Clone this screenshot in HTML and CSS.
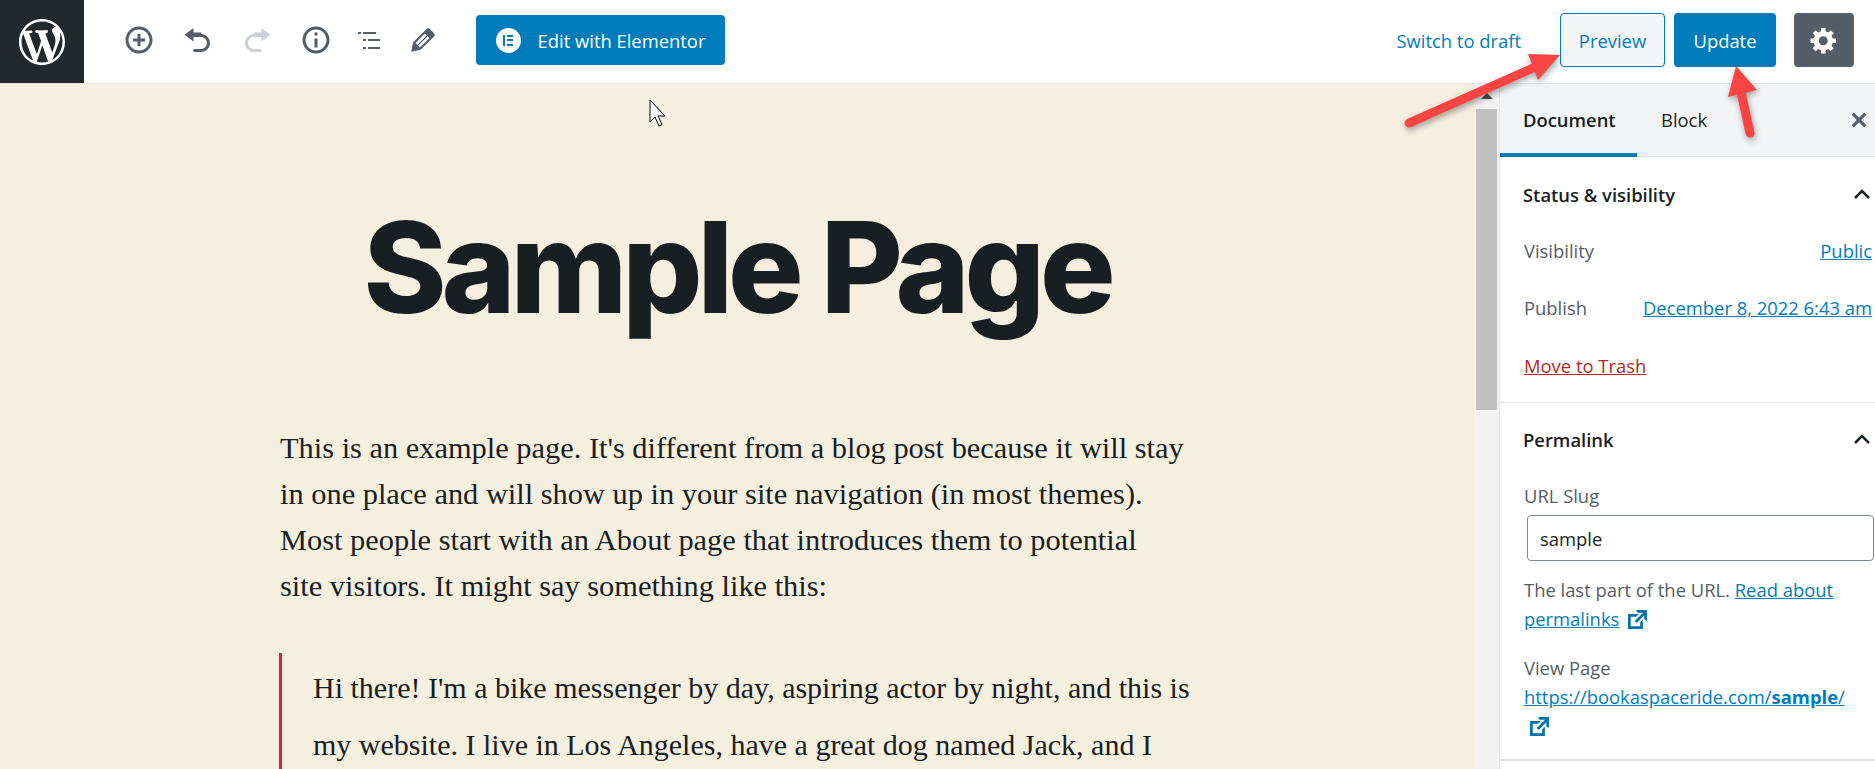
FILE: index.html
```html
<!DOCTYPE html>
<html lang="en">
<head>
<meta charset="utf-8">
<title>Sample Page</title>
<link rel="stylesheet" href="styles.css">
</head>
<body>
<div class="app">
  <header class="topbar">
    <a class="wp-logo"><svg viewBox="0 0 20 20" class="wp-svg"><path d="M20 10c0-5.51-4.49-10-10-10C4.48 0 0 4.49 0 10c0 5.52 4.48 10 10 10 5.51 0 10-4.48 10-10zM7.78 15.37L4.37 6.22c.55-.02 1.17-.08 1.17-.08.5-.06.44-1.13-.06-1.11 0 0-1.45.11-2.37.11-.18 0-.37 0-.58-.01C4.12 2.69 6.87 1.11 10 1.11c2.33 0 4.45.87 6.05 2.34-.68-.11-1.65.39-1.65 1.58 0 .74.45 1.36.9 2.1.35.61.55 1.36.55 2.46 0 1.49-1.4 5-1.4 5l-3.03-8.37c.54-.02.82-.17.82-.17.5-.05.44-1.25-.06-1.22 0 0-1.44.12-2.38.12-.87 0-2.33-.12-2.33-.12-.5-.03-.56 1.2-.06 1.22l.92.08 1.26 3.41zM17.41 10c.24-.64.74-1.87.43-4.25.7 1.29 1.05 2.71 1.05 4.25 0 3.29-1.73 6.24-4.4 7.78.97-2.59 1.94-5.2 2.92-7.78zM6.1 18.09C3.12 16.65 1.11 13.53 1.11 10c0-1.3.23-2.48.72-3.59C3.25 10.3 4.67 14.2 6.1 18.09zm4.03-6.63l2.58 6.98c-.86.29-1.76.45-2.71.45-.79 0-1.57-.11-2.29-.33.81-2.38 1.62-4.74 2.42-7.1z"/></svg></a>
    <div class="tools">
      <span class="tool"><svg viewBox="0 0 20 20" class="ico"><path d="M10 1c-5 0-9 4-9 9s4 9 9 9 9-4 9-9-4-9-9-9zm0 16c-3.900 0-7-3.100-7-7s3.100-7 7-7 7 3.100 7 7-3.100 7-7 7zm1-11H9v3H6v2h3v3h2v-3h3V9h-3V6z"/></svg></span>
      <span class="tool"><svg viewBox="0 0 20 20" class="ico"><path d="M12 5H7V2L1 6.500 7 11V8h5c2.200 0 4 1.800 4 4s-1.800 4-4 4H7v2h5c3.300 0 6-2.700 6-6s-2.700-6-6-6z"/></svg></span>
      <span class="tool tool-off"><svg viewBox="0 0 20 20" class="ico"><path d="M8 5h5V2l6 4.500-6 4.500V8H8c-2.200 0-4 1.800-4 4s1.800 4 4 4h5v2H8c-3.300 0-6-2.700-6-6s2.700-6 6-6z"/></svg></span>
      <span class="tool"><svg viewBox="0 0 20 20" class="ico"><path d="M10 1c-5 0-9 4-9 9s4 9 9 9 9-4 9-9-4-9-9-9zm0 16c-3.900 0-7-3.100-7-7s3.100-7 7-7 7 3.100 7 7-3.100 7-7 7zM9 9h2v6H9zm0-4h2v2H9z"/></svg></span>
      <span class="tool tool-list"><svg viewBox="0 0 22 17" class="ico-list"><path d="M0 0h3v2H0zm5 0h13v2H5zM5 7h3v2H5zm5 0h12v2H10zM5 15h3v2H5zm5 0h12v2H10z"/></svg></span>
      <span class="tool tool-edit"><svg viewBox="0 0 20 20" class="ico ico-edit"><path d="M13.890 3.390l2.710 2.720c.46.46.42 1.240.03 1.640l-8.010 8.020-5.560 1.160 1.160-5.580s7.600-7.630 7.990-8.030c.39-.39 1.220-.39 1.680.07zm-2.730 2.790l-5.590 5.610 1.110 1.110 5.540-5.650zm-2.970 8.230l5.580-5.600-1.070-1.080-5.590 5.600z"/></svg></span>
    </div>
    <a class="btn btn-elementor"><span class="el-badge"><i class="el-bar"></i><i class="el-lines"><b></b><b></b><b></b></i></span>Edit with Elementor</a>
    <a class="draft">Switch to draft</a>
    <a class="btn btn-preview">Preview</a>
    <a class="btn btn-update">Update</a>
    <a class="btn btn-gear"><svg viewBox="0 0 20 20" class="gear"><path d="M18 12h-2.180c-.17.7-.44 1.350-.81 1.930l1.540 1.540-2.100 2.100-1.540-1.540c-.58.36-1.230.63-1.910.79V19H8v-2.180c-.68-.16-1.330-.43-1.910-.79l-1.540 1.540-2.120-2.120 1.540-1.540c-.36-.58-.63-1.230-.79-1.910H1V9.030h2.170c.16-.7.44-1.350.8-1.940L2.430 5.550l2.100-2.100 1.540 1.540c.58-.37 1.240-.64 1.930-.81V2h3v2.180c.68.16 1.330.43 1.910.79l1.540-1.540 2.120 2.120-1.540 1.540c.36.59.64 1.240.8 1.940H18V12zm-8.500 1.500c1.660 0 3-1.340 3-3s-1.340-3-3-3-3 1.340-3 3 1.340 3 3 3z"/></svg></a>
  </header>
  <div class="workspace">
    <main class="editor">
      <h1 class="title">Sample Page</h1>
      <p class="para">This is an example page. It's different from a blog post because it will stay in one place and will show up in your site navigation (in most themes). Most people start with an About page that introduces them to potential site visitors. It might say something like this:</p>
      <blockquote class="quote">Hi there! I'm a bike messenger by day, aspiring actor by night, and this is my website. I live in Los Angeles, have a great dog named Jack, and I</blockquote>
    </main>
    <div class="scrollbar"><span class="scroll-up"></span><span class="scroll-thumb"></span></div>
    <aside class="sidebar">
      <div class="tabs">
        <span class="tab tab-active">Document</span>
        <span class="tab">Block</span>
        <svg viewBox="0 0 20 20" class="close"><path d="M14.950 6.460L11.410 10l3.540 3.540-1.410 1.410L10 11.420l-3.530 3.530-1.420-1.420L8.580 10 5.050 6.470l1.420-1.420L10 8.580l3.540-3.530z"/></svg>
      </div>
      <section class="panel panel-status">
        <div class="panel-head"><span>Status &amp; visibility</span><svg viewBox="0 0 20 20" class="chev"><path d="M3 14l7-7 7 7" /></svg></div>
        <div class="row"><span class="muted">Visibility</span><a class="link">Public</a></div>
        <div class="row"><span class="muted">Publish</span><a class="link">December 8, 2022 6:43 am</a></div>
        <div class="row"><a class="trash">Move to Trash</a></div>
      </section>
      <section class="panel panel-perma">
        <div class="panel-head"><span>Permalink</span><svg viewBox="0 0 20 20" class="chev"><path d="M3 14l7-7 7 7" /></svg></div>
        <div class="slug-label muted">URL Slug</div>
        <div class="slug-input">sample</div>
        <p class="help muted">The last part of the URL. <a class="link">Read about permalinks</a> <svg viewBox="0 0 20 20" class="ext"><path d="M9 3h8v8l-2-1V6.920l-5.600 5.590-1.410-1.410L14.080 5H10zm3 12v-3l2-2v7H3V6h8L9 8H5v7h7z"/></svg></p>
        <p class="view muted">View Page<br><a class="link">https://bookaspaceride.com/<b>sample</b>/</a><br><svg viewBox="0 0 20 20" class="ext ext-solo"><path d="M9 3h8v8l-2-1V6.920l-5.600 5.590-1.410-1.410L14.080 5H10zm3 12v-3l2-2v7H3V6h8L9 8H5v7h7z"/></svg></p>
      </section>
    </aside>
  </div>
  <svg class="arrows" viewBox="0 0 1875 769">
    <g class="arrow">
      <path class="shaft" d="M1409 123L1533 68"/>
      <path d="M1560 55L1528 54L1538 80Z"/>
      <path class="shaft" d="M1750 133L1741 92"/>
      <path d="M1736 66L1728 97L1757 90Z"/>
    </g>
  </svg>
  <svg class="cursor" viewBox="0 0 18 28"><path d="M1 1V23L6 18L10 27L13 25.500L9 17H16Z"/></svg>
</div>
</body>
</html>
```
FILE: styles.css
```css
* { box-sizing: border-box; }
html, body { margin: 0; height: 100%; overflow: hidden; }
body { font-family: "Open Sans", "Noto Sans", sans-serif; font-size: 18.400px; color: #191e23; background: #fff; }
a { color: inherit; }
.app { position: relative; width: 1875px; height: 769px; display: flex; flex-direction: column; overflow: hidden; }

/* top bar */
.topbar { height: 84px; flex: none; display: flex; align-items: center; background: #fff; border-bottom: 1px solid #e2e4e7; padding: 0 21px 3px 0; }
.wp-logo { width: 84px; height: 83px; align-self: flex-start; background: #23282d; display: flex; align-items: center; justify-content: center; flex: none; }
.wp-svg { width: 46px; height: 46px; fill: #fff; }
.tools { display: flex; align-items: center; margin-left: 25px; }
.tool { width: 59px; display: flex; justify-content: center; color: #555d66; }
.tool-list { width: 47px; }
.tool-edit { width: 62px; }
.tool-off { color: #ccd0d4; }
.ico { width: 30px; height: 30px; fill: currentColor; }
.ico-edit { width: 34px; height: 34px; }
.ico-list { width: 22px; height: 17px; fill: currentColor; }
.btn { display: flex; align-items: center; justify-content: center; height: 54px; border-radius: 4px; flex: none; }
.btn-elementor { margin-left: 22px; width: 249px; height: 50px; background: #007cba; color: #fff; gap: 17px; }
.el-badge { width: 25px; height: 25px; border-radius: 50%; background: #fff; display: flex; align-items: center; justify-content: center; gap: 2px; }
.el-bar { width: 2px; height: 11px; background: #007cba; }
.el-lines { display: flex; flex-direction: column; justify-content: space-between; height: 11px; }
.el-lines b { display: block; width: 6px; height: 2px; background: #007cba; }
.draft { margin-left: auto; margin-right: 39px; color: #007cba; }
.btn-preview { width: 105px; background: #f3f5f6; color: #007cba; border: 1px solid #007cba; }
.btn-update { width: 102px; margin-left: 9px; background: #007cba; color: #fff; }
.btn-gear { width: 60px; margin-left: 18px; background: #555d66; }
.gear { width: 30px; height: 30px; fill: #fff; }

/* workspace */
.workspace { flex: 1; display: flex; min-height: 0; }
.editor { width: 1474px; flex: none; background: #f5efe0; padding: 0 280px; overflow: hidden; }
.title { margin: 108px -80px 0; font-family: Inter, sans-serif; font-weight: 800; font-size: 126px; line-height: 1.2; letter-spacing: -0.041em; text-align: center; color: #191e23; }
.para { margin: 82px 10px 0 0; font-family: "Liberation Serif", serif; font-size: 30.400px; line-height: 46px; color: #191e23; }
.quote { margin: 44px 0 0 -1px; padding: 7px 0 0 31px; border-left: 3px solid #cd2653; font-family: "Liberation Serif", serif; font-size: 30px; line-height: 56.500px; color: #191e23; }

.scrollbar { width: 25px; flex: none; background: #f1f1f1; display: flex; flex-direction: column; align-items: center; }
.scroll-up { margin-top: 9px; width: 0; height: 0; border-left: 6px solid transparent; border-right: 6px solid transparent; border-bottom: 6px solid #505050; }
.scroll-thumb { margin-top: 10px; width: 21px; height: 301px; background: #c1c1c1; }

/* sidebar */
.sidebar { flex: 1; min-width: 0; background: #fff; border-left: 1px solid #e2e4e7; }
.tabs { height: 73px; display: flex; align-items: stretch; background: #f3f4f5; border-bottom: 1px solid #e2e4e7; position: relative; }
.tab { display: flex; align-items: center; padding: 2px 23px 0; border-bottom: 4px solid transparent; height: 73px; }
.tab-active { width: 137px; font-weight: 600; border-bottom-color: #007cba; }
.tab + .tab { padding: 2px 0 0 24px; }
.close { position: absolute; top: 21px; left: 344px; width: 30px; height: 30px; fill: #555d66; }

.panel { padding: 0 3px 0 24px; border-bottom: 1px solid #e2e4e7; }
.panel-status { height: 246px; }
.panel-perma { height: 358px; border-bottom-width: 2px; }
.panel-head { display: flex; justify-content: space-between; align-items: center; height: 65px; padding-top: 9px; margin-left: -1px; font-weight: 600; }
.panel-perma .panel-head { height: 53px; padding-top: 19px; }
.chev { width: 20px; height: 20px; fill: none; stroke: #191e23; stroke-width: 2.500; }
.row { display: flex; justify-content: space-between; align-items: center; height: 57px; }
.row:last-child { padding-top: 1px; }
.muted { color: #555d66; }
.link { color: #007cba; text-decoration: underline; }
.trash { color: #b52727; text-decoration: underline; }
.slug-label { margin-top: 28px; line-height: 24px; }
.slug-input { margin: 7px 0 0 3px; width: 347px; height: 46px; border: 1px solid #7e8993; border-radius: 4px; padding: 0 12px; display: flex; align-items: center; }
.help { margin: 14px 0 0; line-height: 29px; }
.view { margin: 20px 0 0; line-height: 29px; }
.ext { width: 27px; height: 27px; fill: #0073aa; vertical-align: -7px; }
.ext-solo { margin-left: 2px; }

/* annotations over the screenshot */
.arrows { position: absolute; inset: 0; width: 1875px; height: 769px; pointer-events: none; }
.arrow { fill: #f94444; filter: drop-shadow(1px 3px 3px rgba(0,0,0,.35)); }
.shaft { fill: none; stroke: #f94444; stroke-width: 9px; stroke-linecap: round; }
.cursor { position: absolute; left: 649px; top: 99px; width: 18px; height: 28px; fill: #fff; stroke: #000; stroke-width: 1; }
```
